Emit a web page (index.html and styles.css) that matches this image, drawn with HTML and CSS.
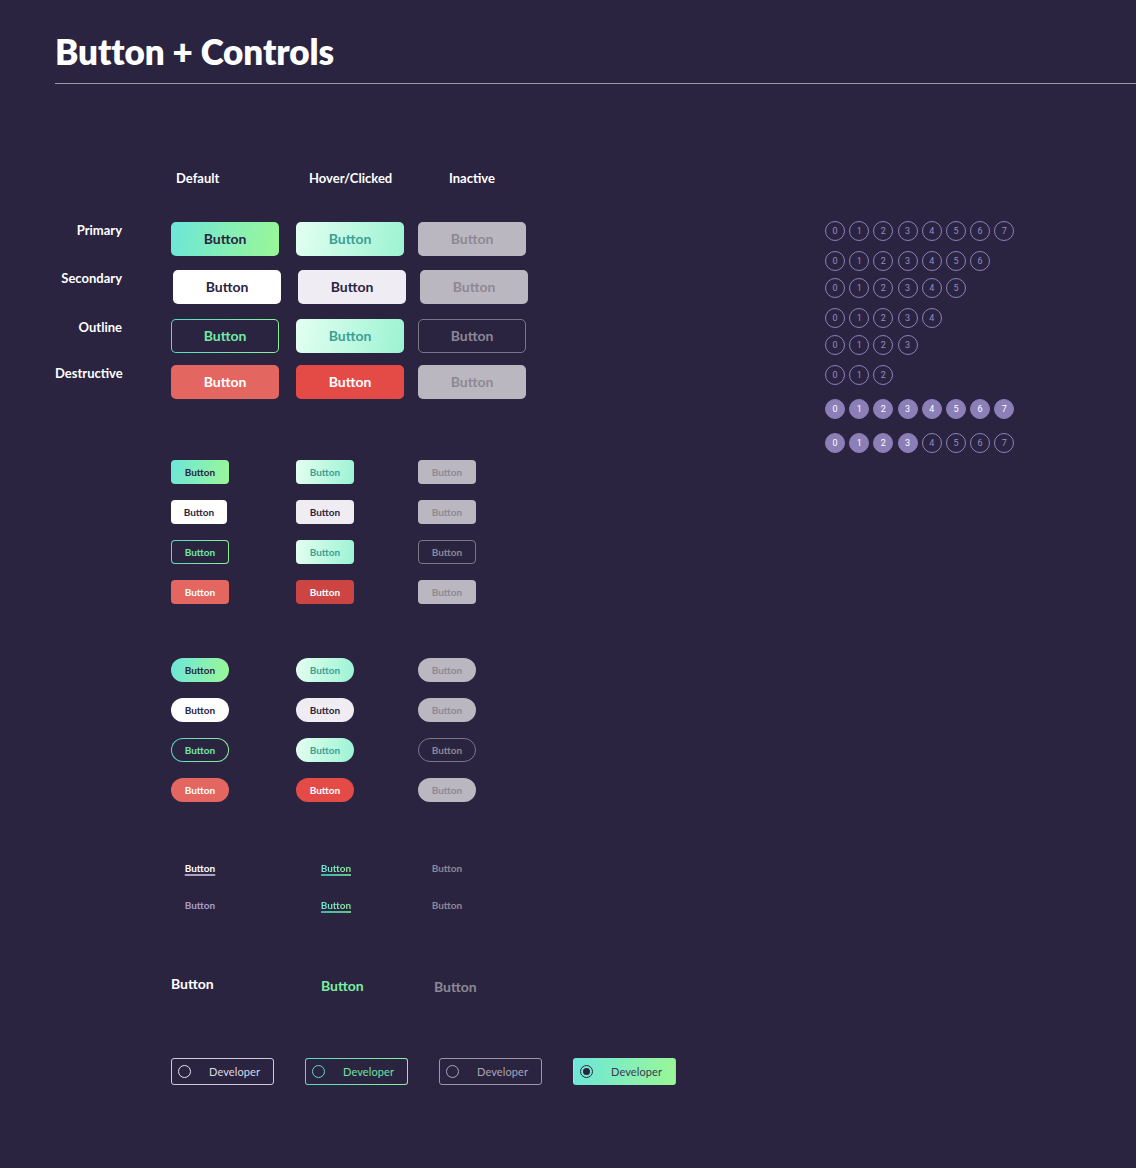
FILE: index.html
```html
<!DOCTYPE html>
<html lang="en">
<head>
<meta charset="utf-8">
<title>Button + Controls</title>
<link rel="stylesheet" href="styles.css">
</head>
<body>
<header class="page-head">
  <h1 class="title">Button + Controls</h1>
  <div class="rule"></div>
</header>
<main class="content">
  <section class="matrix">
    <div class="row heads">
      <div></div>
      <div class="head head-a">Default</div>
      <div class="head head-b">Hover/Clicked</div>
      <div class="head head-c">Inactive</div>
    </div>

    <div class="row big first-big">
      <div class="label">Primary</div>
      <div><span class="btn lg primary">Button</span></div>
      <div><span class="btn lg primary-hover">Button</span></div>
      <div><span class="btn lg inactive">Button</span></div>
    </div>
    <div class="row big gap-14 shift">
      <div class="label">Secondary</div>
      <div><span class="btn lg secondary">Button</span></div>
      <div><span class="btn lg secondary-hover">Button</span></div>
      <div><span class="btn lg inactive">Button</span></div>
    </div>
    <div class="row big gap-15">
      <div class="label">Outline</div>
      <div><span class="btn lg outline">Button</span></div>
      <div><span class="btn lg primary-hover">Button</span></div>
      <div><span class="btn lg outline-inactive">Button</span></div>
    </div>
    <div class="row big gap-12">
      <div class="label">Destructive</div>
      <div><span class="btn lg destructive">Button</span></div>
      <div><span class="btn lg destructive-hover">Button</span></div>
      <div><span class="btn lg inactive">Button</span></div>
    </div>

    <div class="row sm first-sm">
      <div></div>
      <div><span class="btn s primary">Button</span></div>
      <div><span class="btn s primary-hover">Button</span></div>
      <div><span class="btn s inactive">Button</span></div>
    </div>
    <div class="row sm gap-16">
      <div></div>
      <div><span class="btn s narrow secondary">Button</span></div>
      <div><span class="btn s secondary-hover">Button</span></div>
      <div><span class="btn s inactive">Button</span></div>
    </div>
    <div class="row sm gap-16">
      <div></div>
      <div><span class="btn s outline">Button</span></div>
      <div><span class="btn s primary-hover">Button</span></div>
      <div><span class="btn s outline-inactive">Button</span></div>
    </div>
    <div class="row sm gap-16">
      <div></div>
      <div><span class="btn s destructive">Button</span></div>
      <div><span class="btn s destructive-dark">Button</span></div>
      <div><span class="btn s inactive">Button</span></div>
    </div>

    <div class="row sm first-pill">
      <div></div>
      <div><span class="btn s pill primary">Button</span></div>
      <div><span class="btn s pill primary-hover">Button</span></div>
      <div><span class="btn s pill inactive">Button</span></div>
    </div>
    <div class="row sm gap-16">
      <div></div>
      <div><span class="btn s pill secondary">Button</span></div>
      <div><span class="btn s pill secondary-hover">Button</span></div>
      <div><span class="btn s pill inactive">Button</span></div>
    </div>
    <div class="row sm gap-16">
      <div></div>
      <div><span class="btn s pill outline">Button</span></div>
      <div><span class="btn s pill primary-hover">Button</span></div>
      <div><span class="btn s pill outline-inactive">Button</span></div>
    </div>
    <div class="row sm gap-16">
      <div></div>
      <div><span class="btn s pill destructive">Button</span></div>
      <div><span class="btn s pill destructive-hover">Button</span></div>
      <div><span class="btn s pill inactive">Button</span></div>
    </div>

    <div class="row links first-link">
      <div></div>
      <div class="link-cell"><span class="link link-default">Button</span></div>
      <div class="link-cell hover-cell"><span class="link link-hover">Button</span></div>
      <div class="link-cell"><span class="link link-inactive">Button</span></div>
    </div>
    <div class="row links gap-21">
      <div></div>
      <div class="link-cell"><span class="link link-plain">Button</span></div>
      <div class="link-cell hover-cell"><span class="link link-hover">Button</span></div>
      <div class="link-cell"><span class="link link-inactive">Button</span></div>
    </div>

    <div class="row texts">
      <div></div>
      <div><span class="tbtn tbtn-default">Button</span></div>
      <div class="tcell-b"><span class="tbtn tbtn-hover">Button</span></div>
      <div class="tcell-c"><span class="tbtn tbtn-inactive">Button</span></div>
    </div>

    <div class="chips">
      <div class="chip chip-default"><span class="radio"></span><span class="chip-text">Developer</span></div>
      <div class="chip chip-hover"><span class="radio"></span><span class="chip-text">Developer</span></div>
      <div class="chip chip-inactive"><span class="radio"></span><span class="chip-text">Developer</span></div>
      <div class="chip chip-selected"><span class="radio"><span class="dot"></span></span><span class="chip-text">Developer</span></div>
    </div>
  </section>

  <aside class="steps">
    <div class="step-row">
      <span class="step">0</span><span class="step">1</span><span class="step">2</span><span class="step">3</span><span class="step">4</span><span class="step">5</span><span class="step">6</span><span class="step">7</span>
    </div>
    <div class="step-row g10">
      <span class="step">0</span><span class="step">1</span><span class="step">2</span><span class="step">3</span><span class="step">4</span><span class="step">5</span><span class="step">6</span>
    </div>
    <div class="step-row g7">
      <span class="step">0</span><span class="step">1</span><span class="step">2</span><span class="step">3</span><span class="step">4</span><span class="step">5</span>
    </div>
    <div class="step-row g10">
      <span class="step">0</span><span class="step">1</span><span class="step">2</span><span class="step">3</span><span class="step">4</span>
    </div>
    <div class="step-row g7">
      <span class="step">0</span><span class="step">1</span><span class="step">2</span><span class="step">3</span>
    </div>
    <div class="step-row g10">
      <span class="step">0</span><span class="step">1</span><span class="step">2</span>
    </div>
    <div class="step-row g14">
      <span class="step on">0</span><span class="step on">1</span><span class="step on">2</span><span class="step on">3</span><span class="step on">4</span><span class="step on">5</span><span class="step on">6</span><span class="step on">7</span>
    </div>
    <div class="step-row g14">
      <span class="step on">0</span><span class="step on">1</span><span class="step on">2</span><span class="step on">3</span><span class="step">4</span><span class="step">5</span><span class="step">6</span><span class="step">7</span>
    </div>
  </aside>
</main>
</body>
</html>
```

FILE: styles.css
```css
* { box-sizing: border-box; }

html, body {
  margin: 0;
  padding: 0;
  background: #2a2441;
}

body {
  width: 1136px;
  min-height: 1168px;
  font-family: "Lato", "Liberation Sans", sans-serif;
  color: #ffffff;
}

.page-head {
  padding: 31px 0 0 55px;
}

.title {
  margin: 0;
  font-size: 35px;
  line-height: 40px;
  font-weight: 800;
  letter-spacing: -0.1px;
  color: #ffffff;
}

.rule {
  margin-top: 12px;
  height: 1px;
  background: #9c97ad;
}

.content {
  display: flex;
  padding-left: 55px;
}

.matrix {
  width: 770px;
  display: flex;
  flex-direction: column;
}

.row {
  display: grid;
  grid-template-columns: 116px 125px 122px 200px;
  align-items: start;
}

/* header row */
.heads { margin-top: 86px; height: 16px; }
.head {
  font-size: 13px;
  line-height: 16px;
  font-weight: 700;
  color: #ffffff;
}
.head-a { padding-left: 5px; }
.head-b { padding-left: 13px; }
.head-c { padding-left: 31px; }

.label {
  font-size: 13px;
  line-height: 16px;
  font-weight: 700;
  text-align: right;
  padding-right: 49px;
  color: #ffffff;
}

/* vertical rhythm */
.first-big { margin-top: 36px; }
.gap-12 { margin-top: 12px; }
.gap-14 { margin-top: 14px; }
.gap-15 { margin-top: 15px; }
.gap-16 { margin-top: 16px; }
.gap-21 { margin-top: 21px; }
.first-sm { margin-top: 61px; }
.first-pill { margin-top: 54px; }
.first-link { margin-top: 58px; }

.shift .btn { margin-left: 2px; }

/* buttons */
.btn {
  display: flex;
  align-items: center;
  justify-content: center;
  font-weight: 700;
  white-space: nowrap;
}

.btn.lg {
  width: 108px;
  height: 34px;
  border-radius: 5px;
  font-size: 14px;
  padding-bottom: 1px;
}

.btn.s {
  width: 58px;
  height: 24px;
  border-radius: 4px;
  font-size: 10px;
}
.btn.s.narrow { width: 56px; }
.btn.pill { border-radius: 12px; }

.primary {
  background: linear-gradient(100deg, #6de6d9 0%, #9af797 100%);
  color: #2a2441;
}

.primary-hover {
  background: linear-gradient(100deg, #e3fff2 0%, #9cf3d3 100%);
  color: #3c9f94;
}

.inactive {
  background: #bbb7c0;
  color: #8d8895;
}

.secondary {
  background: #ffffff;
  color: #2a2441;
}

.secondary-hover {
  background: #efedf3;
  color: #2a2441;
}

.outline {
  border: 1px solid transparent;
  background:
    linear-gradient(#2a2441, #2a2441) padding-box,
    linear-gradient(100deg, #57d8c8 0%, #8ef196 100%) border-box;
  color: #72e9a4;
}

.outline-inactive {
  border: 1px solid #7b768a;
  background: transparent;
  color: #8d8895;
}

.destructive {
  background: #e36661;
  color: #ffffff;
}

.destructive-hover {
  background: #e54b46;
  color: #ffffff;
}

.destructive-dark {
  background: #cc4542;
  color: #ffffff;
}

/* text links */
.links { height: 16px; }
.link-cell {
  width: 58px;
  display: flex;
  justify-content: center;
}
.hover-cell { margin-left: 11px; }

.link {
  font-size: 10px;
  line-height: 16px;
  font-weight: 700;
  position: relative;
}

.link-default {
  color: #ffffff;
  text-decoration: underline;
  text-decoration-color: #a9a3bd;
  text-decoration-thickness: 2px;
  text-underline-offset: 2px;
}

.link-plain { color: #a89fc9; }

.link-hover {
  background: linear-gradient(90deg, #6ee7d6, #8ef196);
  -webkit-background-clip: text;
  background-clip: text;
  color: transparent;
}
.link-hover::after {
  content: "";
  position: absolute;
  left: 0;
  right: 0;
  bottom: 0px;
  height: 2px;
  background: linear-gradient(90deg, #3fb5a8, #69c58a);
}

.link-inactive { color: #8d8895; }

/* large text buttons */
.texts { margin-top: 60px; }
.tbtn {
  display: inline-block;
  font-size: 14px;
  line-height: 18px;
  font-weight: 700;
}
.tcell-b { padding-left: 25px; padding-top: 2px; }
.tcell-c { padding-left: 16px; padding-top: 3px; }
.tbtn-default { color: #ffffff; }
.tbtn-hover { color: #7aef9e; }
.tbtn-inactive { color: #8d8895; }

/* radio chips */
.chips {
  display: flex;
  gap: 31px;
  margin-top: 62px;
  padding-left: 116px;
}

.chip {
  width: 103px;
  height: 27px;
  border-radius: 3px;
  display: flex;
  align-items: center;
  padding-left: 6px;
}

.radio {
  width: 13px;
  height: 13px;
  border-radius: 50%;
  border: 1.5px solid #e8e5ee;
  flex: none;
  display: flex;
  align-items: center;
  justify-content: center;
}

.chip-text {
  margin-left: 18px;
  font-size: 11px;
  font-weight: 400;
  letter-spacing: 0.1px;
}

.chip-default {
  border: 1px solid #cfcad8;
  color: #dcd8e3;
}

.chip-hover {
  border: 1px solid transparent;
  background:
    linear-gradient(#2a2441, #2a2441) padding-box,
    linear-gradient(100deg, #57d8c8 0%, #8ef196 100%) border-box;
  color: #6fe3a1;
}
.chip-hover .radio { border-color: #5edcc6; }

.chip-inactive {
  border: 1px solid #9d98a8;
  color: #aaa5b4;
}
.chip-inactive .radio { border-color: #aaa5b4; }

.chip-selected {
  border: 1px solid transparent;
  background: linear-gradient(100deg, #6de6d9 0%, #9af797 100%);
  color: #3b3652;
}
.chip-selected .radio { border-color: #2a2441; }
.dot {
  width: 7px;
  height: 7px;
  border-radius: 50%;
  background: #2a2441;
}

/* step indicators */
.steps {
  margin-top: 137px;
  display: flex;
  flex-direction: column;
}

.step-row {
  display: flex;
  gap: 4.2px;
}
.g7 { margin-top: 7px; }
.g10 { margin-top: 10px; }
.g14 { margin-top: 14px; }

.step {
  width: 20px;
  height: 20px;
  border-radius: 50%;
  border: 1.2px solid #8d80bb;
  color: #988bc6;
  font-size: 9px;
  font-family: "Roboto", "Liberation Sans", sans-serif;
  display: flex;
  align-items: center;
  justify-content: center;
}

.step.on {
  background: #8c7fb8;
  border-color: #8c7fb8;
  color: #ffffff;
}
```
